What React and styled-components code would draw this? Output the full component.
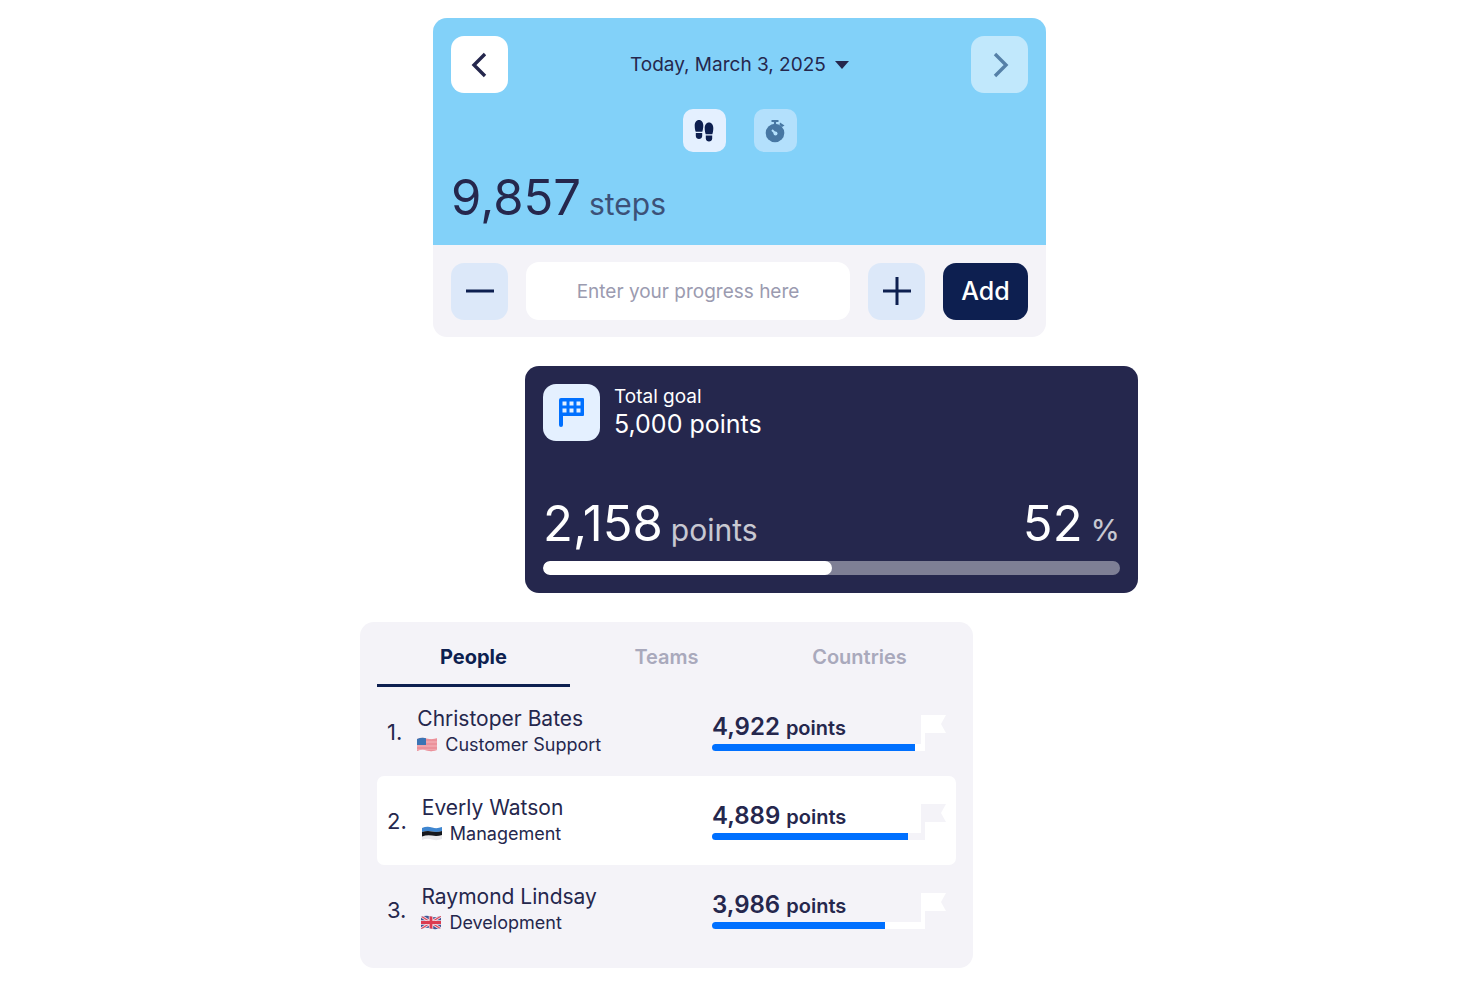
import { useState } from 'react';
import styled, { createGlobalStyle } from 'styled-components';

const GlobalStyle = createGlobalStyle`
  * {
    box-sizing: border-box;
  }
  body {
    margin: 0;
    background: #fff;
    color: #25274d;
    font-family: Inter, 'Liberation Sans', sans-serif;
  }
  button, input, select {
    font-family: inherit;
    color: inherit;
    border: 0;
    margin: 0;
    padding: 0;
  }
  button {
    cursor: pointer;
  }
`;

const Page = styled.main`
  display: flex;
  flex-direction: column;
  gap: 29px;
  padding: 18px 1px 20px 0;
`;

/* shifts the card to one side of the page centre */
const Slot = styled.div`
  display: flex;
  justify-content: center;
  padding-left: ${({ $left }) => $left || 0}px;
  padding-right: ${({ $right }) => $right || 0}px;
`;

const Card = styled.section`
  width: 100%;
  max-width: 613px;
  border-radius: 14px;
  overflow: hidden;
  background: ${({ $dark }) => ($dark ? '#25274d' : '#f4f3f8')};
  color: ${({ $dark }) => ($dark ? '#fff' : '#25274d')};
`;

const DayPanel = styled.div`
  background: #82d1f9;
  height: 227px;
  padding: 18px;
`;

const DayBar = styled.div`
  display: flex;
  align-items: center;
  justify-content: space-between;
`;

const SquareButton = styled.button`
  display: flex;
  align-items: center;
  justify-content: center;
  flex: none;
  width: 57px;
  height: 57px;
  border-radius: 13px;
  background: ${({ $tone }) => $tone || '#fff'};
  &:disabled {
    background: #c1e8fc;
    color: #5580a8;
    cursor: default;
  }
`;

const DatePicker = styled.label`
  position: relative;
  display: flex;
  align-items: center;
  svg {
    position: absolute;
    right: 0;
    pointer-events: none;
  }
`;

const DateSelect = styled.select`
  appearance: none;
  background: none;
  font-size: 19px;
  line-height: 26px;
  padding-right: 23px;
`;

const Metrics = styled.div`
  display: flex;
  justify-content: center;
  gap: 28px;
  margin-top: 16px;
`;

const MetricButton = styled.button`
  display: flex;
  align-items: center;
  justify-content: center;
  width: 43px;
  height: 43px;
  border-radius: 10px;
  background: #e4f0ff;
  color: #0d1f50;
  opacity: ${({ $active }) => ($active ? 1 : 0.5)};
`;

const Amount = styled.p`
  display: flex;
  align-items: baseline;
  gap: 8px;
  margin: 0;
  font-size: 49px;
  line-height: 58px;
  span {
    font-size: 30px;
    opacity: 0.75;
  }
`;

const DayAmount = styled(Amount)`
  margin-top: 17px;
`;

const EntryForm = styled.form`
  display: flex;
  align-items: center;
  gap: 18px;
  padding: 17px 18px;
`;

const EntryInput = styled.input`
  flex: 1;
  min-width: 0;
  height: 58px;
  border-radius: 13px;
  background: #fff;
  font-size: 19px;
  text-align: center;
  &::placeholder {
    color: #9b9bb0;
    opacity: 1;
  }
`;

const AddButton = styled.button`
  width: 85px;
  height: 57px;
  border-radius: 13px;
  background: #0d1f50;
  color: #fff;
  font-size: 25px;
  font-weight: 500;
`;

const GoalBody = styled.div`
  display: flex;
  flex-direction: column;
  height: 227px;
  padding: 18px;
`;

const GoalHead = styled.div`
  display: flex;
  gap: 14px;
`;

const GoalIcon = styled.span`
  display: flex;
  align-items: center;
  justify-content: center;
  width: 57px;
  height: 57px;
  border-radius: 13px;
  background: #e4f0ff;
`;

const GoalText = styled.p`
  margin: 0;
  font-size: 19px;
  line-height: 26px;
  strong {
    display: block;
    font-size: 25px;
    line-height: 28px;
    font-weight: 400;
  }
`;

const GoalNumbers = styled.div`
  display: flex;
  justify-content: space-between;
  margin-top: auto;
  margin-bottom: 2px;
`;

const GoalTrack = styled.div`
  height: 14px;
  border-radius: 7px;
  background: #7e7f95;
  overflow: hidden;
`;

const GoalFill = styled.div`
  height: 100%;
  border-radius: 7px;
  background: #fff;
`;

const Board = styled.div`
  padding: 0 17px 14px;
`;

const Tabs = styled.div`
  display: grid;
  grid-template-columns: repeat(3, 1fr);
`;

const Tab = styled.button`
  height: 65px;
  padding-top: 8px;
  background: none;
  border-bottom: 3px solid ${({ $active }) => ($active ? '#0d1f50' : 'transparent')};
  color: ${({ $active }) => ($active ? '#0d1f50' : '#a9a9bc')};
  font-size: 20px;
  font-weight: ${({ $active }) => ($active ? 700 : 600)};
`;

const People = styled.ol`
  list-style: none;
  margin: 0;
  padding: 0;
`;

const Person = styled.li`
  display: flex;
  align-items: center;
  height: 89px;
  padding: 0 10px;
  border-radius: 7px;
  background: ${({ $own }) => ($own ? '#fff' : 'transparent')};
`;

const Place = styled.span`
  margin-right: 15px;
  font-size: 22px;
`;

const Who = styled.div`
  flex: 1;
  padding-bottom: 2px;
  font-size: 21px;
  line-height: 28px;
`;

const Team = styled.div`
  display: flex;
  align-items: center;
  gap: 8px;
  font-size: 18px;
  line-height: 24px;
`;

const Score = styled.div`
  display: grid;
  grid-template-columns: 209px 25px;
  grid-template-rows: 29px 7px;
  padding-top: 2px;
`;

const Points = styled.div`
  font-size: 24px;
  line-height: 24px;
  font-weight: 600;
  span {
    font-size: 20px;
  }
`;

const ScoreTrack = styled.div`
  grid-row: 2;
  border-radius: 4px 0 0 4px;
  background: ${({ $own }) => ($own ? '#f4f3f8' : '#fff')};
  overflow: hidden;
`;

const ScoreFill = styled.div`
  height: 100%;
  background: #0070ff;
`;

const FinishFlag = styled.svg`
  grid-column: 2;
  grid-row: 1 / 3;
  fill: ${({ $own }) => ($own ? '#f4f3f8' : '#fff')};
`;

const Chevron = ({ right }) => (
  <svg width="24" height="28" viewBox="0 0 24 28" fill="none" stroke="currentColor" strokeWidth="3.4">
    <path d={right ? 'M7 3L18 14L7 25' : 'M17 3L6 14L17 25'} />
  </svg>
);

const Steps = () => (
  <svg width="20" height="24" viewBox="0 0 20 24" fill="currentColor">
    <path d="M5 1C7.800 1 9.300 3.500 9.300 6.500C9.300 9 8.800 11 8.300 12.800H1.700C1.100 11 .7 9 .7 6.500C.7 3.500 2.200 1 5 1ZM1.800 14H8.200V17C8.200 21 1.800 21 1.800 17Z" />
    <path d="M15 3.500C17.800 3.500 19.300 6 19.300 9C19.300 11.500 18.900 13.500 18.300 15.300H11.700C11.200 13.500 10.700 11.500 10.700 9C10.700 6 12.200 3.500 15 3.500ZM11.800 16.500H18.200V19.500C18.200 23.500 11.800 23.500 11.800 19.500Z" />
  </svg>
);

const Stopwatch = () => (
  <svg width="22" height="24" viewBox="0 0 22 24">
    <circle cx="11" cy="14" r="9.300" fill="currentColor" />
    <path d="M7.500 2H14.500M11 2V6" stroke="currentColor" strokeWidth="2.200" fill="none" />
    <path d="M16 3.500L20.500 6.500L18 8L15.500 6Z" fill="currentColor" />
    <path d="M8 11L11.500 14.500" stroke="#e4f0ff" strokeWidth="2" />
    <circle cx="11.500" cy="14.500" r="2" fill="#e4f0ff" />
  </svg>
);

const GoalFlag = () => (
  <svg width="26" height="29" viewBox="0 0 26 29">
    <path
      fill="#0070ff"
      fillRule="evenodd"
      d="M2 0H24Q25 0 25 1V17Q25 18 24 18H4V27Q4 29 2 29Q0 29 0 27V2Q0 0 2 0ZM3.500 3.500V7.500H7.500V3.500ZM10.500 3.500V7.500H14.500V3.500ZM17.500 3.500V7.500H21.500V3.500ZM3.500 10.500V14.500H7.500V10.500ZM10.500 10.500V14.500H14.500V10.500ZM17.500 10.500V14.500H21.500V10.500Z"
    />
  </svg>
);

const wave = 'M0 2Q5 0 10 1.500Q15 3 20 1V13Q15 15 10 13.500Q5 12 0 14Z';

const CountryFlag = ({ code }) => (
  <svg width="20" height="15" viewBox="0 0 20 15" role="img" aria-label={code}>
    <clipPath id={`flag-${code}`}>
      <path d={wave} />
    </clipPath>
    <g clipPath={`url(#flag-${code})`}>
      {code === 'US' && (
        <>
          <rect width="20" height="15" fill="#f0a3ab" />
          <path d="M0 3H20M0 7H20M0 11H20M0 14H20" stroke="#e98c97" strokeWidth="1.500" />
          <rect width="9" height="8" fill="#3c74b4" />
        </>
      )}
      {code === 'EE' && (
        <>
          <rect width="20" height="15" fill="#e9e9ec" />
          <path d="M0 0H20V5Q15 6.500 10 5.500Q5 4.500 0 6Z" fill="#3f86d0" />
          <path d="M0 6Q5 4.500 10 5.500Q15 6.500 20 5V9Q15 10.500 10 9.500Q5 8.500 0 10.500Z" fill="#15171c" />
        </>
      )}
      {code === 'GB' && (
        <>
          <rect width="20" height="15" fill="#3f5796" />
          <path d="M0 1L20 14M20 1L0 14" stroke="#f3dfe6" strokeWidth="3" />
          <path d="M0 1L20 14M20 1L0 14" stroke="#dc4a5c" strokeWidth="1.200" />
          <path d="M10 0V15M0 7.500H20" stroke="#f3dfe6" strokeWidth="4.500" />
          <path d="M10 0V15M0 7.500H20" stroke="#dc3b50" strokeWidth="2.800" />
        </>
      )}
    </g>
  </svg>
);

const people = [
  { name: 'Christoper Bates', team: 'Customer Support', country: 'US', points: '4,922', done: 97 },
  { name: 'Everly Watson', team: 'Management', country: 'EE', points: '4,889', done: 94, own: true },
  { name: 'Raymond Lindsay', team: 'Development', country: 'GB', points: '3,986', done: 83 },
];

const ProgressCard = () => {
  const [metric, setMetric] = useState('steps');

  return (
    <Card>
      <DayPanel>
        <DayBar>
          <SquareButton type="button" aria-label="Previous day">
            <Chevron />
          </SquareButton>
          <DatePicker>
            <DateSelect aria-label="Day">
              <option>Today, March 3, 2025</option>
            </DateSelect>
            <svg width="14" height="8" viewBox="0 0 14 8" fill="currentColor">
              <path d="M0 0H14L7 8Z" />
            </svg>
          </DatePicker>
          <SquareButton type="button" aria-label="Next day" disabled>
            <Chevron right />
          </SquareButton>
        </DayBar>
        <Metrics>
          <MetricButton
            type="button"
            aria-label="Steps"
            $active={metric === 'steps'}
            onClick={() => setMetric('steps')}
          >
            <Steps />
          </MetricButton>
          <MetricButton
            type="button"
            aria-label="Time"
            $active={metric === 'time'}
            onClick={() => setMetric('time')}
          >
            <Stopwatch />
          </MetricButton>
        </Metrics>
        <DayAmount>
          9,857 <span>steps</span>
        </DayAmount>
      </DayPanel>
      <EntryForm onSubmit={(e) => e.preventDefault()}>
        <SquareButton type="button" aria-label="Less" $tone="#dce8f9">
          <svg width="30" height="30" viewBox="0 0 30 30" stroke="#0d1f50" strokeWidth="3">
            <path d="M1 15H29" />
          </svg>
        </SquareButton>
        <EntryInput type="text" aria-label="Progress" placeholder="Enter your progress here" />
        <SquareButton type="button" aria-label="More" $tone="#dce8f9">
          <svg width="30" height="30" viewBox="0 0 30 30" stroke="#0d1f50" strokeWidth="3">
            <path d="M1 15H29M15 1V29" />
          </svg>
        </SquareButton>
        <AddButton type="submit">Add</AddButton>
      </EntryForm>
    </Card>
  );
};

const GoalCard = () => (
  <Card $dark>
    <GoalBody>
      <GoalHead>
        <GoalIcon>
          <GoalFlag />
        </GoalIcon>
        <GoalText>
          Total goal
          <strong>5,000 points</strong>
        </GoalText>
      </GoalHead>
      <GoalNumbers>
        <Amount>
          2,158 <span>points</span>
        </Amount>
        <Amount>
          52 <span>%</span>
        </Amount>
      </GoalNumbers>
      <GoalTrack>
        <GoalFill style={{ width: '50%' }} />
      </GoalTrack>
    </GoalBody>
  </Card>
);

const LeaderboardCard = () => {
  const [tab, setTab] = useState('People');

  return (
    <Card>
      <Board>
        <Tabs role="tablist">
          {['People', 'Teams', 'Countries'].map((name) => (
            <Tab
              key={name}
              type="button"
              role="tab"
              aria-selected={tab === name}
              $active={tab === name}
              onClick={() => setTab(name)}
            >
              {name}
            </Tab>
          ))}
        </Tabs>
        <People>
          {people.map((person, i) => (
            <Person key={person.name} $own={person.own}>
              <Place>{i + 1}.</Place>
              <Who>
                {person.name}
                <Team>
                  <CountryFlag code={person.country} />
                  {person.team}
                </Team>
              </Who>
              <Score>
                <Points>
                  {person.points} <span>points</span>
                </Points>
                <ScoreTrack $own={person.own}>
                  <ScoreFill style={{ width: `${person.done}%` }} />
                </ScoreTrack>
                <FinishFlag $own={person.own} width="25" height="36" viewBox="0 0 25 36">
                  <path d="M0 0H25L20 9L25 18H4V36H0Z" />
                </FinishFlag>
              </Score>
            </Person>
          ))}
        </People>
      </Board>
    </Card>
  );
};

const App = () => (
  <>
    <GlobalStyle />
    <Page>
      <Slot>
        <ProgressCard />
      </Slot>
      <Slot $left={184}>
        <GoalCard />
      </Slot>
      <Slot $right={146}>
        <LeaderboardCard />
      </Slot>
    </Page>
  </>
);

export default App;
